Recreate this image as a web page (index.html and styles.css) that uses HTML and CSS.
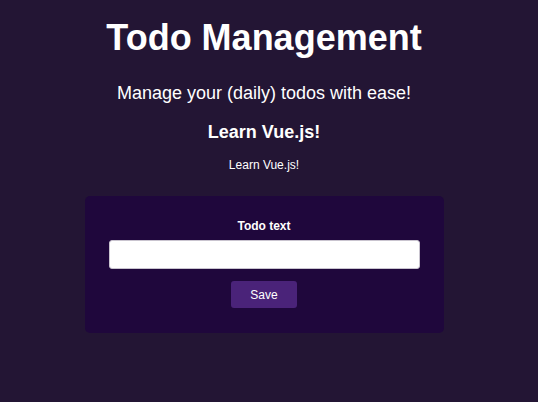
FILE: index.html
```html
<!DOCTYPE html>
<html lang="en">
<head>
<meta charset="utf-8">
<title>Todo Management</title>
<link rel="stylesheet" href="styles.css">
</head>
<body>
<main class="page">
  <header class="hero">
    <h1 class="hero-title">Todo Management</h1>
    <p class="hero-subtitle">Manage your (daily) todos with ease!</p>
  </header>
  <section class="goal">
    <h2 class="goal-title">Learn Vue.js!</h2>
    <p class="goal-text">Learn Vue.js!</p>
  </section>
  <form class="card">
    <label class="card-label" for="todo">Todo text</label>
    <input class="card-input" id="todo" type="text">
    <button class="card-button" type="button">Save</button>
  </form>
</main>
</body>
</html>
```
FILE: styles.css
```css
html, body {
  margin: 0;
  padding: 0;
  background: #231534;
}
body {
  font-family: "Liberation Sans", Arial, sans-serif;
  color: #ffffff;
}
.page {
  width: 528px;
  display: flex;
  flex-direction: column;
  align-items: center;
}
.hero {
  display: flex;
  flex-direction: column;
  align-items: center;
}
.hero-title {
  margin: 17px 0 0;
  font-size: 36px;
  font-weight: bold;
  line-height: normal;
}
.hero-subtitle {
  margin: 24px 0 0;
  font-size: 18px;
  line-height: normal;
}
.goal {
  display: flex;
  flex-direction: column;
  align-items: center;
}
.goal-title {
  margin: 18px 0 0;
  font-size: 18px;
  font-weight: bold;
  line-height: normal;
}
.goal-text {
  margin: 15px 0 0;
  font-size: 12px;
  line-height: normal;
}
.card {
  margin-top: 24px;
  width: 311px;
  padding: 23px 24px 25px;
  background: #1f073c;
  border-radius: 5px;
  display: flex;
  flex-direction: column;
  align-items: center;
}
.card-label {
  font-size: 12px;
  font-weight: bold;
  line-height: normal;
}
.card-input {
  margin-top: 7px;
  width: 100%;
  height: 29px;
  box-sizing: border-box;
  border: 1px solid #c9c4cf;
  border-radius: 3px;
  background: #ffffff;
  font-family: inherit;
  font-size: 12px;
  padding: 0 6px;
}
.card-button {
  margin-top: 12px;
  width: 66px;
  height: 27px;
  border: none;
  border-radius: 3px;
  background: #4a2379;
  color: #ffffff;
  font-family: inherit;
  font-size: 12px;
  padding: 0;
}
```
